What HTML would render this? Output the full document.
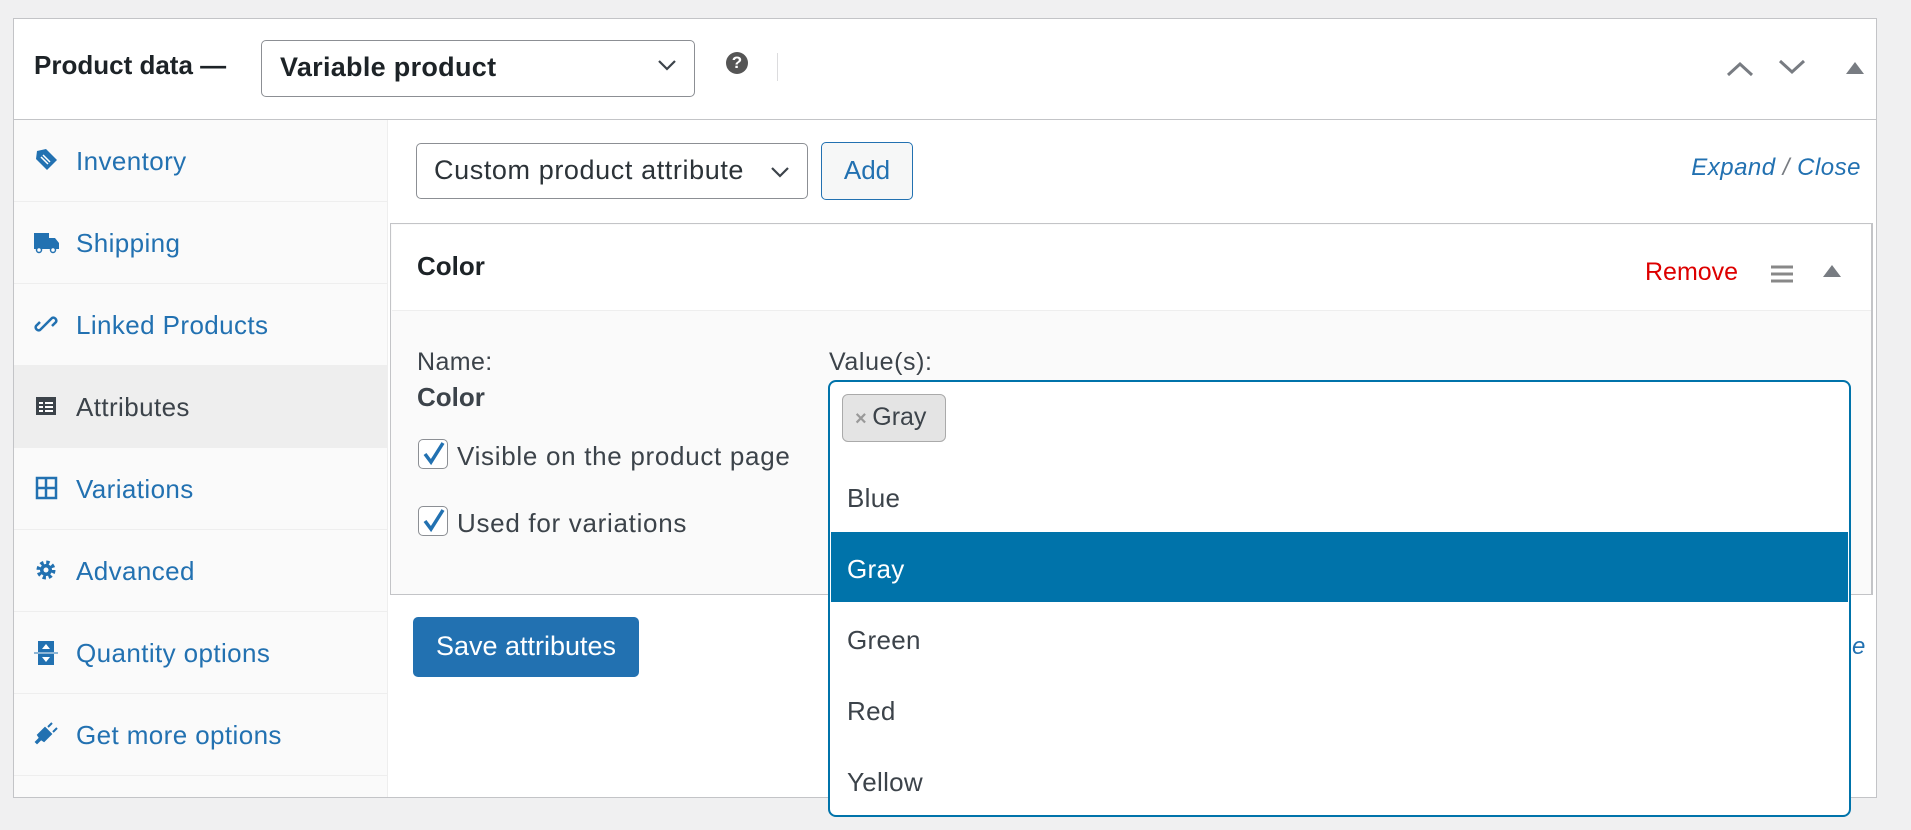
<!DOCTYPE html>
<html><head><meta charset="utf-8"><style>
*{box-sizing:border-box;margin:0;padding:0}
body{width:1911px;height:830px;background:#f0f0f1;font-family:"Liberation Sans",Arial,sans-serif;position:relative;overflow:hidden;color:#1d2327}
.a{position:absolute}
.box{left:13px;top:18px;width:1864px;height:780px;background:#fff;border:1px solid #c3c4c7}
.blue{color:#2271b1}
.side{left:14px;top:120px;width:374px;height:677px;background:#fafafa;border-right:1px solid #eee}
.row{position:absolute;left:0;width:374px;height:82px;border-bottom:1px solid #eee;font-size:26px;letter-spacing:0.4px;color:#2271b1}
.row span{position:absolute;left:62px;top:26px}
.row svg{position:absolute;left:20px;top:28px}
.chk{width:30px;height:30px;border:1.5px solid #8c8f94;border-radius:5px;background:#fff}
.opt{left:831px;width:1017px;height:71px;font-size:26px;letter-spacing:0.3px;color:#3c434a;padding:22px 0 0 16px}
</style></head><body>
<div class="a box"></div>
<div class="a" style="left:14px;top:119px;width:1862px;height:1px;background:#c3c4c7"></div>
<div class="a" style="left:34px;top:50px;font-size:26px;font-weight:bold;color:#1d2327">Product data —</div>
<div class="a" style="left:261px;top:40px;width:434px;height:57px;border:1.5px solid #8c8f94;border-radius:5px;background:#fff"></div>
<div class="a" style="left:280px;top:52px;font-size:27px;font-weight:bold;letter-spacing:0.3px;color:#1d2327">Variable product</div>
<svg class="a" style="left:657px;top:58px" width="20" height="14" viewBox="0 0 20 14"><path d="M2 3l8 8 8-8" fill="none" stroke="#3c434a" stroke-width="2.2"/></svg>
<div class="a" style="left:726px;top:52px;width:22px;height:22px;border-radius:50%;background:#555;color:#fff;font-size:17px;font-weight:bold;text-align:center;line-height:22px">?</div>
<div class="a" style="left:777px;top:53px;width:1px;height:28px;background:#dcdcde"></div>
<svg class="a" style="left:1725px;top:60px" width="30" height="18" viewBox="0 0 30 18"><path d="M3 15L15 4l12 11" fill="none" stroke="#787c82" stroke-width="3"/></svg>
<svg class="a" style="left:1777px;top:58px" width="30" height="18" viewBox="0 0 30 18"><path d="M3 3l12 11L27 3" fill="none" stroke="#787c82" stroke-width="3"/></svg>
<svg class="a" style="left:1846px;top:61px" width="18" height="14"><path d="M0 13L9 1l9 12z" fill="#787c82"/></svg>
<div class="a side">
<div class="row" style="top:0"><svg width="24" height="24" viewBox="0 0 24 24"><path d="M12 1L23 12 13 22 2 11 3 3z" fill="#2271b1"/><path d="M7 9l7 7M9 7l7 7" stroke="#fff" stroke-width="1.5"/></svg><span>Inventory</span></div>
<div class="row" style="top:82px"><svg width="26" height="24" viewBox="0 0 26 24"><path d="M0 3h15v16H0zM15 8h6l4 5v6H15z" fill="#2271b1"/><circle cx="5" cy="20" r="2.5" fill="#fff" stroke="#2271b1" stroke-width="1.5"/><circle cx="19" cy="20" r="2.5" fill="#fff" stroke="#2271b1" stroke-width="1.5"/></svg><span>Shipping</span></div>
<div class="row" style="top:164px"><svg width="24" height="24" viewBox="0 0 24 24"><path d="M10 14l-4 4a3 3 0 01-4-4l4-4M14 10l4-4a3 3 0 014 4l-4 4M8 16l8-8" fill="none" stroke="#2271b1" stroke-width="2.5"/></svg><span>Linked Products</span></div>
<div class="row" style="top:246px;background:#eee;color:#3c434a"><svg width="24" height="24" viewBox="0 0 24 24"><rect x="2" y="3" width="20" height="18" fill="#3c434a"/><path d="M5 9h4M11 9h8M5 13h4M11 13h8M5 17h4M11 17h8" stroke="#fff" stroke-width="2"/></svg><span>Attributes</span></div>
<div class="row" style="top:328px"><svg width="24" height="24" viewBox="0 0 24 24"><rect x="3" y="2" width="19" height="20" fill="none" stroke="#2271b1" stroke-width="2.5"/><path d="M12 2v20M3 12h19" stroke="#2271b1" stroke-width="2.5"/></svg><span>Variations</span></div>
<div class="row" style="top:410px"><svg width="24" height="24" viewBox="0 0 24 24"><circle cx="12" cy="12" r="7" fill="none" stroke="#2271b1" stroke-width="5" stroke-dasharray="3 2.5"/><circle cx="12" cy="12" r="6" fill="#2271b1"/><circle cx="12" cy="12" r="2.5" fill="#fafafa"/></svg><span>Advanced</span></div>
<div class="row" style="top:492px"><svg width="24" height="26" viewBox="0 0 24 26"><rect x="4" y="1" width="16" height="24" fill="#2271b1"/><path d="M0 13h24" stroke="#fafafa" stroke-width="2"/><path d="M0 13h24" stroke="#2271b1" stroke-width="1"/><path d="M12 4l-4 5h8zM12 22l-4-5h8z" fill="#fff"/></svg><span>Quantity options</span></div>
<div class="row" style="top:574px"><svg width="24" height="24" viewBox="0 0 24 24"><path d="M3 21l4-4 3 2 7-7-6-6-7 7 2 3-4 4zM14 5l4-4M19 10l4-4" fill="#2271b1" stroke="#2271b1" stroke-width="2"/></svg><span>Get more options</span></div>
</div>
<div class="a" style="left:416px;top:143px;width:392px;height:56px;border:1.5px solid #8c8f94;border-radius:5px;background:#fff"></div>
<div class="a" style="left:434px;top:155px;font-size:27px;letter-spacing:0.6px;color:#2c3338">Custom product attribute</div>
<svg class="a" style="left:770px;top:166px" width="20" height="12" viewBox="0 0 20 12"><path d="M2 2l8 8 8-8" fill="none" stroke="#3c434a" stroke-width="2.2"/></svg>
<div class="a" style="left:821px;top:142px;width:92px;height:58px;border:1.5px solid #2271b1;border-radius:5px;background:#f6f7f7;color:#2271b1;font-size:26px;text-align:center;line-height:55px">Add</div>
<div class="a blue" style="right:50px;top:154px;font-size:24px;letter-spacing:0.5px;font-style:italic">Expand <span style="color:#787c82">/</span> Close</div>
<div class="a" style="left:390px;top:223px;width:1483px;height:372px;border:1.5px solid #c3c4c7;border-right:2px solid #c3c4c7;background:#fafafa"></div>
<div class="a" style="left:392px;top:225px;width:1479px;height:86px;background:#fff;border-bottom:1px solid #eee"></div>
<div class="a" style="left:417px;top:251px;font-size:26px;font-weight:bold">Color</div>
<div class="a" style="left:1645px;top:258px;font-size:25px;color:#d00">Remove</div>
<svg class="a" style="left:1771px;top:265px" width="22" height="18"><path d="M0 2h22M0 9h22M0 16h22" stroke="#888" stroke-width="3"/></svg>
<svg class="a" style="left:1823px;top:264px" width="18" height="14"><path d="M0 13L9 1l9 12z" fill="#787c82"/></svg>
<div class="a" style="left:417px;top:348px;font-size:25px;letter-spacing:0.4px;color:#3c434a">Name:</div>
<div class="a" style="left:417px;top:382px;font-size:26px;font-weight:bold;color:#3c434a">Color</div>
<div class="a chk" style="left:418px;top:439px"></div>
<svg class="a" style="left:421px;top:440px" width="26" height="28"><path d="M4 14l6 8L22 3" fill="none" stroke="#2271b1" stroke-width="3.5"/></svg>
<div class="a" style="left:457px;top:441px;font-size:26px;letter-spacing:0.7px;color:#3c434a">Visible on the product page</div>
<div class="a chk" style="left:418px;top:506px"></div>
<svg class="a" style="left:421px;top:507px" width="26" height="28"><path d="M4 14l6 8L22 3" fill="none" stroke="#2271b1" stroke-width="3.5"/></svg>
<div class="a" style="left:457px;top:508px;font-size:26px;letter-spacing:0.7px;color:#3c434a">Used for variations</div>
<div class="a" style="left:829px;top:348px;font-size:25px;letter-spacing:0.6px;color:#3c434a">Value(s):</div>
<div class="a" style="left:413px;top:617px;width:226px;height:60px;background:#2271b1;border-radius:5px;color:#fff;font-size:27px;text-align:center;line-height:58px">Save attributes</div>
<div class="a blue" style="left:1852px;top:633px;font-size:24px;font-style:italic">e</div>
<div class="a" style="left:828px;top:380px;width:1023px;height:437px;border:2.5px solid #0073aa;border-radius:8px;background:#fff"></div>
<div class="a" style="left:842px;top:394px;width:104px;height:48px;background:#e4e4e4;border:1.5px solid #aaa;border-radius:6px;font-size:25px;color:#3c434a;line-height:45px;padding-left:12px"><span style="color:#999;font-size:20px;font-weight:bold">× </span>Gray</div>
<div class="a opt" style="top:462px;padding-top:21px">Blue</div>
<div class="a opt" style="top:532px;height:70px;background:#0073aa;color:#fff">Gray</div>
<div class="a opt" style="top:603px">Green</div>
<div class="a opt" style="top:674px">Red</div>
<div class="a opt" style="top:745px;height:68px">Yellow</div>
</body></html>
